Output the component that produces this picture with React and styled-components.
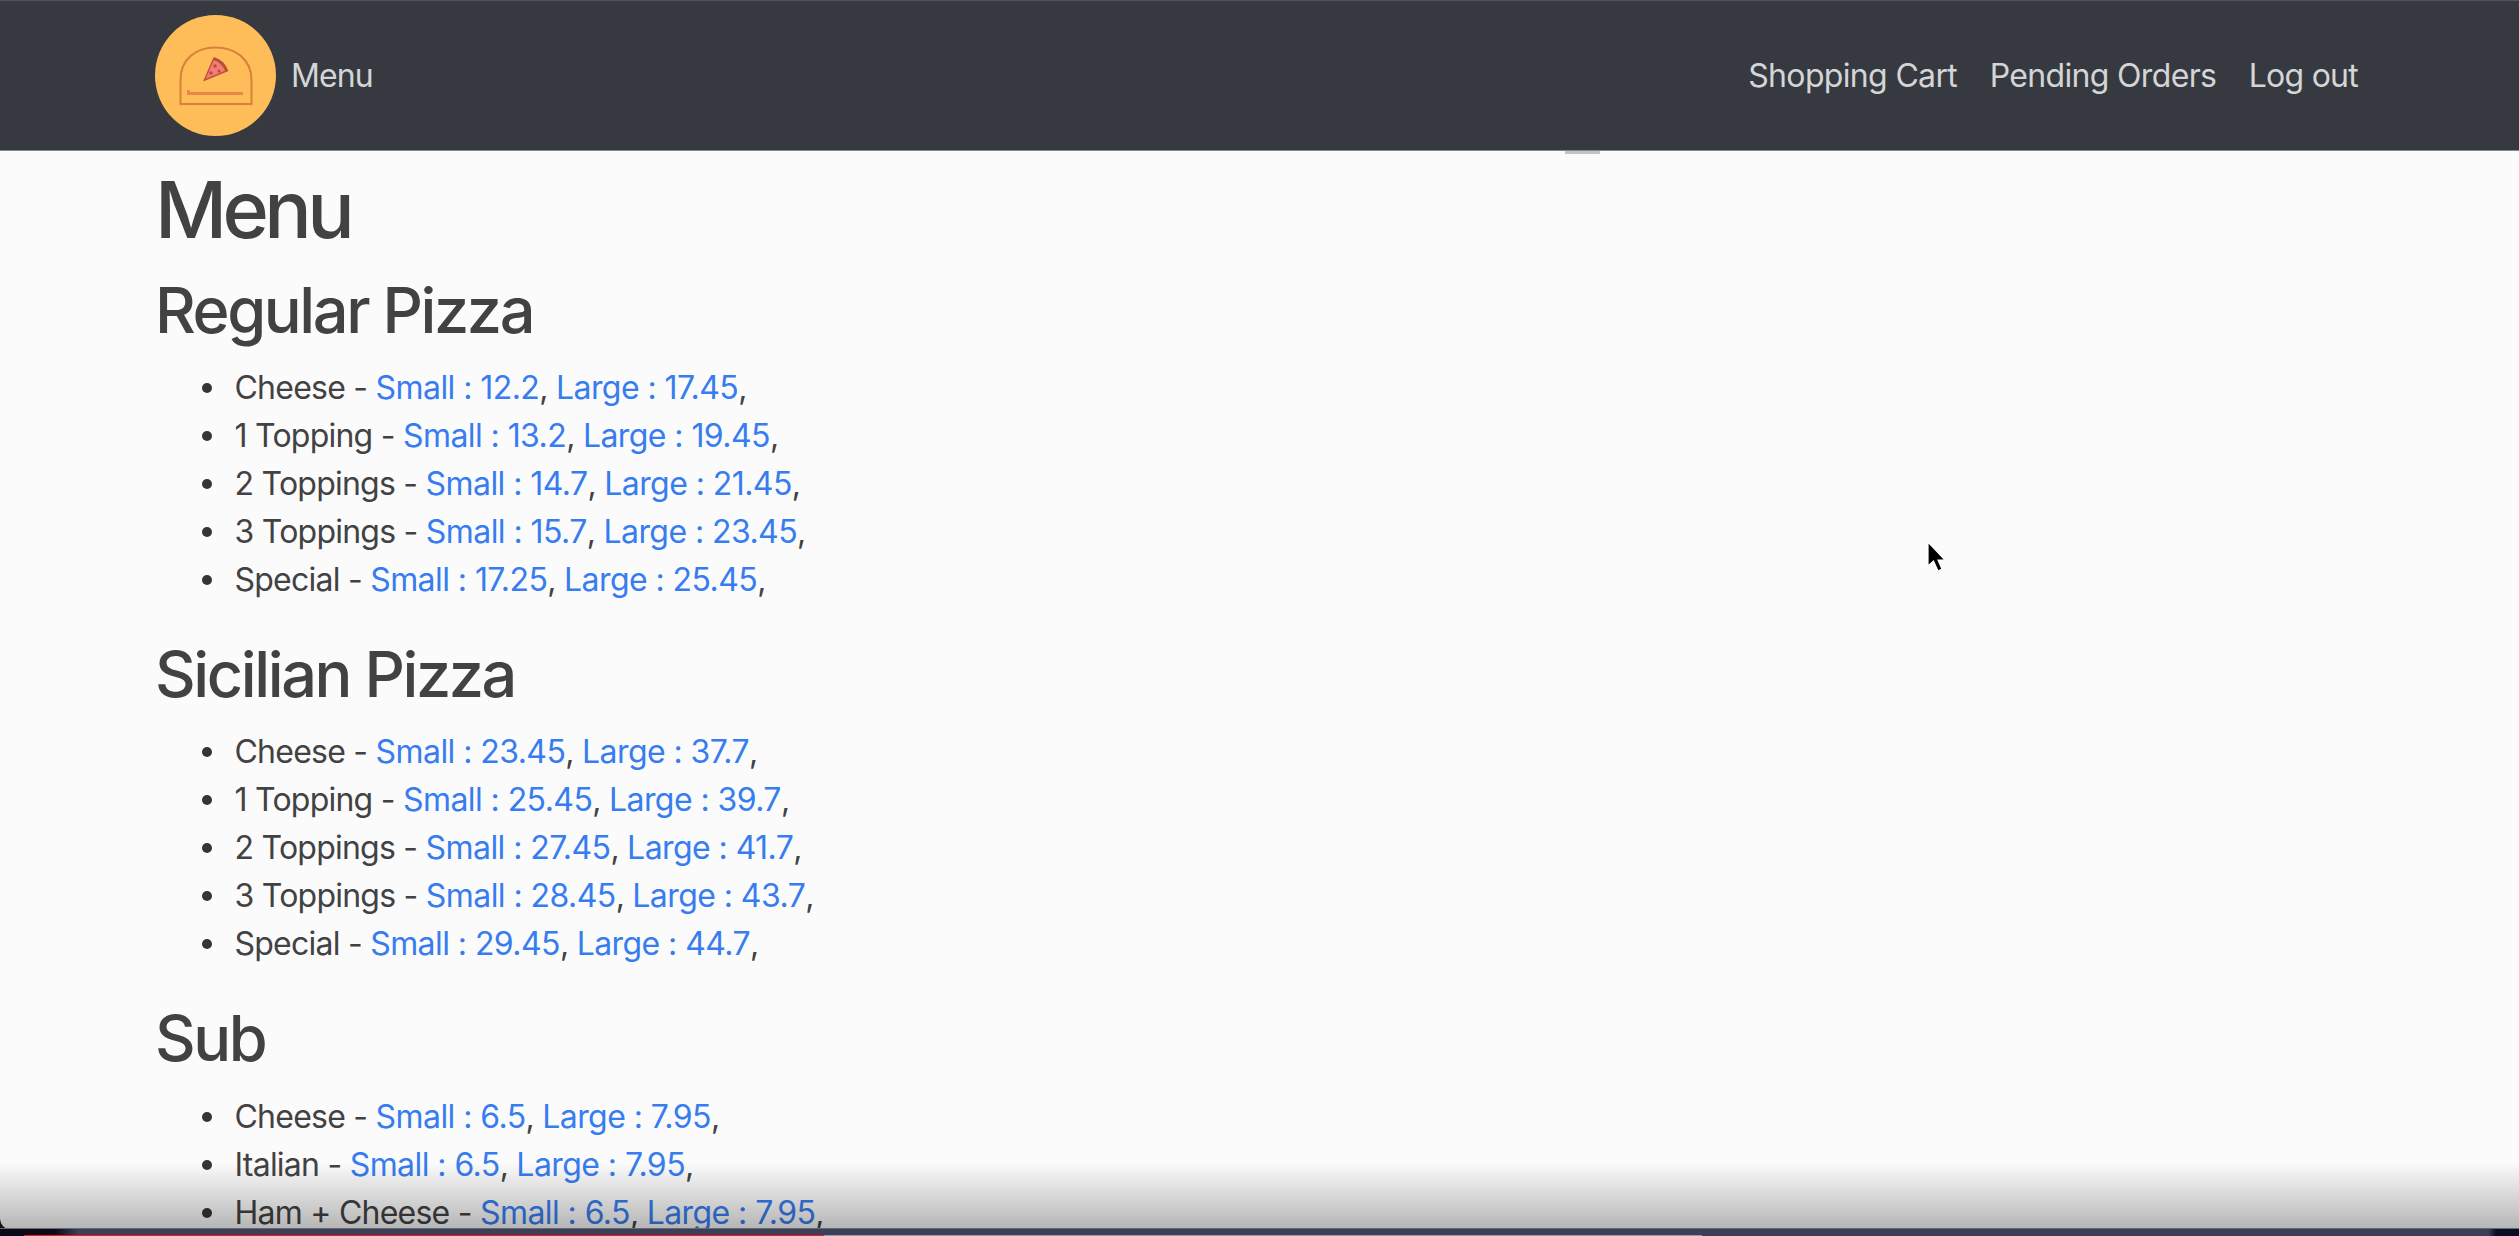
import React from "react";
import styled, { createGlobalStyle } from "styled-components";

const Global = createGlobalStyle`
  * { box-sizing: border-box; }
  body { margin: 0; overflow: hidden; background: #fbfbfc; }
`;
const Page = styled.div`
  position: relative;
  height: 1236px;
  overflow: hidden;
  background: #fbfbfc;
  color: #424243;
  font-family: Inter, "Liberation Sans", sans-serif;
  font-size: 32px;
  line-height: 48px;
  letter-spacing: -0.76px;
`;
const Navbar = styled.nav`
  position: relative;
  height: 151px;
  padding: 0 161px 0 155px;
  display: flex;
  align-items: center;
  background: #363a40;
  border-top: 1px solid #505357;
  border-bottom: 1px solid #87888b;
  &::after {
    content: "";
    position: absolute;
    left: 1565px;
    top: 150px;
    width: 35px;
    height: 3px;
    background: #c4c3c5;
  }
`;
const Logo = styled.svg`
  display: block;
  width: 121px;
  height: 121px;
  margin-right: 15px;
`;
const NavLink = styled.a`
  color: #d3d5d7;
  letter-spacing: ${(p) => p.$track || "-0.66px"};
  white-space: nowrap;
`;
const NavRight = styled.div`
  display: flex;
  gap: 32.5px;
  margin-left: auto;
`;
const Main = styled.main`
  padding: 10px 155px 0;
`;
const Title = styled.h1`
  margin: 0 0 14.5px;
  font-size: 79px;
  line-height: 96px;
  font-weight: 540;
  letter-spacing: -4.6px;
`;
const Section = styled.section`
  height: 364.4px;
`;
const Heading = styled.h2`
  margin: 0 0 15.5px;
  font-size: 63px;
  line-height: 77px;
  font-weight: 540;
  letter-spacing: -2.4px;
`;
const List = styled.ul`
  margin: 0;
  padding: 0;
  list-style: none;
`;
const Item = styled.li`
  display: flex;
  align-items: center;
  height: 48px;
  padding-left: 47px;
  white-space: pre;
  &::before {
    content: "";
    width: 10px;
    height: 10px;
    margin-right: 22.5px;
    border-radius: 50%;
    background: #353536;
  }
`;
const Price = styled.a`
  color: #377df0;
  letter-spacing: -0.57px;
`;
const Shade = styled.div`
  position: absolute;
  left: 0;
  right: 0;
  bottom: 7px;
  height: 66px;
  background: linear-gradient(to bottom, rgba(0, 0, 0, 0), rgba(0, 0, 0, 0.06) 20%, rgba(0, 0, 0, 0.28));
`;
const Strip = styled.div`
  position: absolute;
  left: 0;
  right: 0;
  bottom: 0;
  height: 8px;
  background: linear-gradient(to right, #090b19 0 55px, #3b4058 78px 2488px, #0a0e24 2496px);
  border-top: 1px solid #686a73;
`;
const Corner = styled.svg`
  position: absolute;
  left: 0;
  bottom: 7px;
`;
const Progress = styled.div`
  position: absolute;
  left: 24px;
  bottom: 0;
  width: 1678px;
  height: 1px;
  background: linear-gradient(to right, #f01825 800px, #9698a6 800px);
`;
const Cursor = styled.svg`
  position: absolute;
  left: 1924px;
  top: 539px;
`;

const menu = [
  { name: "Regular Pizza", items: [["Cheese", "12.2", "17.45"], ["1 Topping", "13.2", "19.45"], ["2 Toppings", "14.7", "21.45"], ["3 Toppings", "15.7", "23.45"], ["Special", "17.25", "25.45"]] },
  { name: "Sicilian Pizza", items: [["Cheese", "23.45", "37.7"], ["1 Topping", "25.45", "39.7"], ["2 Toppings", "27.45", "41.7"], ["3 Toppings", "28.45", "43.7"], ["Special", "29.45", "44.7"]] },
  { name: "Sub", items: [["Cheese", "6.5", "7.95"], ["Italian", "6.5", "7.95"], ["Ham + Cheese", "6.5", "7.95"]] },
];

function PizzaLogo() {
  return (
    <Logo viewBox="0 0 121 121">
      <circle cx="60.5" cy="60.5" r="60.5" fill="#ffbd59" />
      <path d="M25.5 89V65C25.5 44 41 32.500 60.500 32.500S96.500 44 96.500 65V89Z" fill="none" stroke="#d9803a" strokeWidth="2" />
      <path d="M33.500 75V78.500H88" fill="none" stroke="#e5884a" strokeWidth="3" />
      <path d="M49.500 65L58.500 44Q68 46 71.500 56Z" fill="#ee8078" stroke="#c74f3c" strokeWidth="1.500" />
      <path d="M58.500 43.500Q68 46 72 56.500" fill="none" stroke="#bd4f37" strokeWidth="3" />
      <circle cx="60" cy="51" r="1.800" fill="#cc4048" />
      <circle cx="56" cy="58" r="1.800" fill="#cc4048" />
      <circle cx="64" cy="56" r="1.600" fill="#cc4048" />
    </Logo>
  );
}

export default function App() {
  return (
    <Page>
      <Global />
      <Navbar>
        <PizzaLogo />
        <NavLink $track="-0.9px">Menu</NavLink>
        <NavRight>
          <NavLink>Shopping Cart</NavLink>
          <NavLink>Pending Orders</NavLink>
          <NavLink $track="-0.75px">Log out</NavLink>
        </NavRight>
      </Navbar>
      <Main>
        <Title>Menu</Title>
        {menu.map((group) => (
          <Section key={group.name}>
            <Heading>{group.name}</Heading>
            <List>
              {group.items.map(([name, small, large]) => (
                <Item key={name}>
                  <span>
                    {name} - <Price>Small : {small}</Price>, <Price>Large : {large}</Price>,
                  </span>
                </Item>
              ))}
            </List>
          </Section>
        ))}
      </Main>
      <Shade />
      <Corner width="8" height="10" viewBox="0 0 8 10"><path d="M0 0Q1 8 8 10H0Z" fill="#11121c" /></Corner>
      <Strip />
      <Progress />
      <Cursor width="26" height="36" viewBox="0 0 26 36">
        <path d="M4 3V27L9.500 22L14 32L18 30L14 21H21Z" fill="#000" stroke="#fff" strokeWidth="1.200" />
      </Cursor>
    </Page>
  );
}
